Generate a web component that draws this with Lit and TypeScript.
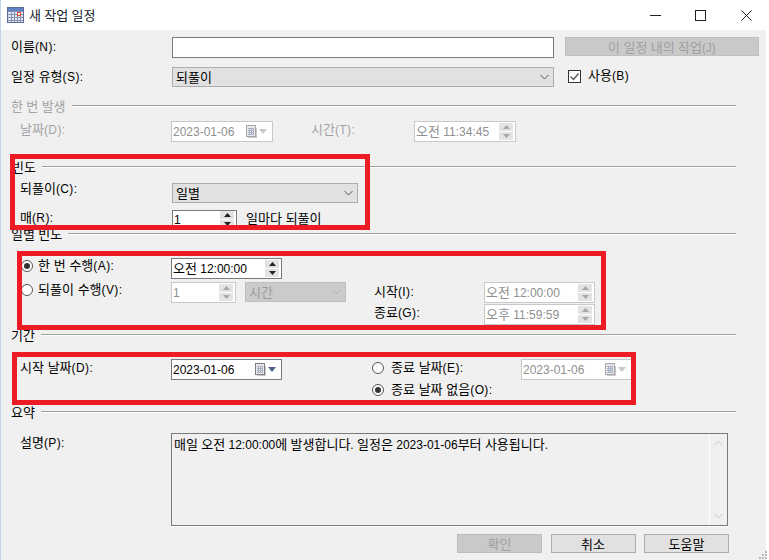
import { LitElement, html, css, svg } from "lit";
import { customElement } from "lit/decorators.js";

// Hangul runs and Latin runs use different faces so their advances match the reference.
// The wrapper keeps spaces at run boundaries when the parent is a flex container.
const t = (s: string) => html`<span class="txt">${s.split(/([\uAC00-\uD7A3]+)/).filter(Boolean).map((p) =>
  /[\uAC00-\uD7A3]/.test(p) ? html`<span class="ko">${p}</span>` : html`<span class="lt">${p}</span>`
)}</span>`;

const chevron = (up = false) => html`<svg class="chev" width="9" height="6" viewBox="0 0 9 6"><path d=${up ? "M.5 5 4.5 1l4 4" : "M.5 1l4 4 4-4"} fill="none" stroke="currentColor"/></svg>`;

const spinBtns = () => html`<span class="spin">
  <span class="sb"><svg width="7" height="4" viewBox="0 0 7 4"><path d="M3.5 0 7 4H0z" fill="currentColor"/></svg></span>
  <span class="sb"><svg width="7" height="4" viewBox="0 0 7 4"><path d="M0 0h7L3.5 4z" fill="currentColor"/></svg></span>
</span>`;

const calendar = () => html`<span class="cal">
  <svg width="12" height="13" viewBox="0 0 12 13">
    <rect x="1.5" y=".5" width="9" height="11" fill="#e8e8ee" stroke="currentColor"/>
    ${[3, 5, 7, 9].map((y) => svg`<path d="M3 ${y + 0.5}h6" stroke="#a9b2c4"/>`)}
    ${[4, 6, 8].map((x) => svg`<path d="M${x + 0.5} 3v7" stroke="#a9b2c4"/>`)}
    <path d="M3 12.5h9M11.5 3v9" stroke="#c9c9c9"/>
  </svg>
  <svg class="drop" width="8" height="5" viewBox="0 0 8 5"><path d="M0 0h8L4 5z" fill="currentColor"/></svg>
</span>`;

const radio = (on = false) => html`<span class="radio">${on ? html`<span class="dot"></span>` : ""}</span>`;

@customElement("app-root")
export class AppRoot extends LitElement {
  static styles = css`
    :host { display: block; position: relative; width: 769px; height: 560px; overflow: hidden; background: #fff;
      font-family: "Liberation Sans", "Noto Sans CJK KR", sans-serif; font-size: 12px; line-height: 14px; color: #000; }
    .ko { font-family: "Noto Sans CJK KR", sans-serif; font-size: 13px; }
    .lab .lt, .rlab .lt { letter-spacing: .4px; }
    .txt { white-space: pre; }
    .window { width: 766px; height: 560px; border-left: 1px solid #c6d5ea; box-sizing: border-box; }
    .title { height: 30px; background: #fff; display: flex; align-items: center; padding-left: 6px; }
    .title .ic { margin-right: 5px; }
    .title .name { flex: 1; color: #10202c; }
    .wc { display: flex; }
    .wc svg { display: block; }
    .wc .min { margin-right: 34px; }
    .wc .max { margin-right: 35px; }
    .wc .cls { margin-right: 14px; }
    .body { height: 530px; background: #f0f0f0; padding: 7px 0 0 10px; box-sizing: border-box; }

    .row { display: flex; align-items: flex-start; }
    .in { padding-left: 9px; }
    .ir { padding-left: 10px; }
    .rc { padding-left: 363px; }
    .re { padding-left: 361px; }
    .lab { flex: none; height: 14px; white-space: nowrap; }
    .o0 { margin-top: 0; } .o1 { margin-top: 1px; } .o2 { margin-top: 2px; } .om { margin-top: -2px; }

    .w161 { width: 161px; } .w151 { width: 151px; } .w152 { width: 152px; } .w103 { width: 103px; } .w110 { width: 110px; }
    .mt9 { margin-top: 9px; } .mt7 { margin-top: 7px; } .mt8 { margin-top: 8px; } .mt3 { margin-top: 3px; } .mt1 { margin-top: 1px; } .mt2 { margin-top: 2px; }
    .mt14 { margin-top: 14px; } .mt17 { margin-top: 17px; }
    .h17 { height: 17px; }
    .h14 { height: 14px; }

    .head { display: flex; align-items: center; gap: 6px; width: 725px; height: 14px; }
    .head.h1 { margin-top: 12px; }
    .head.h2 { margin-top: 18px; }
    .head.p1 { padding-left: 1px; box-sizing: border-box; }
    .head .line { flex: 1; height: 1px; background: #a0a0a0; border-bottom: 1px solid #fff; }
    .dis { color: #a3a3a3; }

    .field { flex: none; height: 21px; box-sizing: border-box; border: 1px solid #7a7a7a; background: #fff; display: flex; align-items: center; padding-left: 1px; position: relative; }
    .field.off { border-color: #c8c8c8; color: #8f8f8f; }
    .field.off .spin, .field.off .cal { color: #a6a6a6; }
    .spin { margin-left: auto; margin-right: 2px; display: flex; flex-direction: column; gap: 1px; color: #222; }
    .sb { width: 14px; height: 8px; background: #e3e3e3; display: flex; align-items: center; justify-content: center; }
    .sb svg { display: block; }
    .cal { margin-left: auto; margin-right: 5px; display: flex; align-items: center; gap: 2px; color: #7d7d7d; }
    .cal svg { display: block; }
    .cal .drop { color: #4f6186; }
    .field.off .cal .drop { color: #c9c9c2; }

    .sel { flex: none; height: 20px; box-sizing: border-box; background: #e1e1e1; border: 1px solid #adadad; display: flex; align-items: center; padding: 0 4px 0 3px; }
    .sel .chev { margin-left: auto; color: #555; }
    .sel.off { background: #cbcbcb; border-color: #bfbfbf; color: #9a9a9a; }
    .sel.off .chev { color: #b0b0b0; }
    .chev { display: block; }

    .act { flex: none; width: 194px; height: 19px; margin-left: 11px; box-sizing: border-box; background: #c9c9c9; border: 1px solid #bfbfbf; color: #a0a0a0; text-align: center; line-height: 17px; }
    .check { flex: none; width: 13px; height: 13px; box-sizing: border-box; border: 1px solid #333; background: #fff; margin: 3px 7px 0 14px; }
    .check svg { display: block; }
    .w382 { width: 382px; } .w186 { width: 186px; } .w101 { width: 101px; }
    .w102 { width: 102px; } .w111 { width: 111px; } .w65 { width: 65px; } .s19 { height: 19px; }
    .ml38 { margin-left: 38px; } .ml9 { margin-left: 9px; } .ml28 { margin-left: 28px; } .ml90 { margin-left: 90px; }
    .rlab { flex: none; display: flex; align-items: center; gap: 5px; width: 150px; height: 14px; }
    .rlab.e { gap: 7px; width: auto; }
    .rlab.e.r-end { width: 149px; }
    .radio { flex: none; width: 12px; height: 12px; box-sizing: border-box; border: 1.5px solid #555; border-radius: 50%; background: #fff; display: flex; align-items: center; justify-content: center; margin-top: 1px; }
    .dot { width: 6px; height: 6px; border-radius: 50%; background: #333; }
    .unit { margin-left: 9px; }

    .summary { flex: none; width: 557px; height: 93px; box-sizing: border-box; border: 1px solid #7a7a7a; box-shadow: 0 1px 0 #fff; display: flex; }
    .summary .text { flex: 1; padding: 3px 2px; }
    .sbar { flex: none; width: 17px; border-left: 1px solid #fff; display: flex; flex-direction: column; justify-content: space-between; align-items: center; padding: 6px 0; color: #c4c4c4; }

    .btns { display: flex; gap: 8.5px; margin-left: 446px; margin-top: 8px; }
    .btn { width: 85px; height: 19px; box-sizing: border-box; background: #e1e1e1; border: 1px solid #adadad; text-align: center; line-height: 17px; }
    .btn.off { background: #c9c9c9; border-color: #bcbcbc; color: #a0a0a0; }

    .grip { position: absolute; left: 759px; top: 551px; display: block; }
    .red { position: absolute; box-sizing: border-box; border: 5px solid #ed1c24; pointer-events: none; }
    .r1 { left: 10px; top: 154px; width: 360px; height: 76px; }
    .r2 { left: 17px; top: 251px; width: 589px; height: 79px; }
    .r3 { left: 12px; top: 352px; width: 624px; height: 53px; }
  `;

  render() {
    return html`
      <div class="window">
        <div class="title">
          <svg class="ic" width="17" height="16" viewBox="0 0 17 16">
            <rect x=".5" y=".5" width="16" height="15" fill="#dfe5f2" stroke="#5b6f96"/>
            <rect x="1" y="1" width="15" height="3" fill="#5f83c4"/>
            ${[4, 7, 10, 13].map((y) => svg`<path d="M1 ${y + 0.5}h15" stroke="#8593ae"/>`)}
            ${[4, 7, 10, 13].map((x) => svg`<path d="M${x + 0.5} 4v11" stroke="#8593ae"/>`)}
            <rect x="10.5" y="5.5" width="3" height="3" fill="#fff" stroke="#e0492f"/>
          </svg>
          <span class="name">${t("새 작업 일정")}</span>
          <div class="wc">
            <svg class="min" width="11" height="11" viewBox="0 0 11 11"><path d="M0 5.5h11" stroke="#222"/></svg>
            <svg class="max" width="11" height="11" viewBox="0 0 11 11"><rect x=".5" y=".5" width="10" height="10" fill="none" stroke="#222"/></svg>
            <svg class="cls" width="11" height="11" viewBox="0 0 11 11"><path d="M.5.5l10 10M10.5.5l-10 10" stroke="#222" fill="none"/></svg>
          </div>
        </div>
        <div class="body">
          <div class="row">
            <span class="lab w161 o2">${t("이름(N):")}</span>
            <div class="field w382"></div>
            <div class="act">${t("이 일정 내의 작업(J)")}</div>
          </div>
          <div class="row mt9">
            <span class="lab w161 o2">${t("일정 유형(S):")}</span>
            <div class="sel w382">${t("되풀이")}${chevron()}</div>
            <div class="check"><svg width="11" height="11" viewBox="0 0 11 11"><path d="M1.5 5.5l3 3 5-6" fill="none" stroke="#555" stroke-width="1.3"/></svg></div>
            <span class="lab o1">${t("사용(B)")}</span>
          </div>

          <div class="head h1 dis"><span>${t("한 번 발생")}</span><span class="line"></span></div>
          <div class="row in mt8 dis">
            <span class="lab w151 o1">${t("날짜(D):")}</span>
            <div class="field off w102">${t("2023-01-06")}${calendar()}</div>
            <span class="lab w103 o1 ml38">${t("시간(T):")}</span>
            <div class="field off w102">${t("오전 11:34:45")}${spinBtns()}</div>
          </div>

          <div class="head h2 p1"><span>${t("빈도")}</span><span class="line"></span></div>
          <div class="row in mt9">
            <span class="lab w152 om">${t("되풀이(C):")}</span>
            <div class="sel w186">${t("일별")}${chevron()}</div>
          </div>
          <div class="row in mt7 h17">
            <span class="lab w152 o0">${t("매(R):")}</span>
            <div class="field w65 s19">${t("1")}${spinBtns()}</div>
            <span class="lab unit o1">${t("일마다 되풀이")}</span>
          </div>

          <div class="head"><span>${t("일별 빈도")}</span><span class="line"></span></div>
          <div class="row ir mt17">
            <span class="rlab">${radio(true)}<span>${t("한 번 수행(A):")}</span></span>
            <div class="field w111">${t("오전 12:00:00")}${spinBtns()}</div>
          </div>
          <div class="row ir mt3">
            <span class="rlab">${radio()}<span>${t("되풀이 수행(V):")}</span></span>
            <div class="field off w65 dis">${t("1")}${spinBtns()}</div>
            <div class="sel off w101 ml9">${t("시간")}${chevron()}</div>
            <span class="lab w110 o2 ml28">${t("시작(I):")}</span>
            <div class="field off w111">${t("오전 12:00:00")}${spinBtns()}</div>
          </div>
          <div class="row rc mt1">
            <span class="lab w110 o1">${t("종료(G):")}</span>
            <div class="field off w111">${t("오후 11:59:59")}${spinBtns()}</div>
          </div>

          <div class="head mt3"><span>${t("기간")}</span><span class="line"></span></div>
          <div class="row in mt17">
            <span class="lab w151 o1">${t("시작 날짜(D):")}</span>
            <div class="field w111">${t("2023-01-06")}${calendar()}</div>
            <span class="rlab e r-end ml90 o1">${radio()}<span>${t("종료 날짜(E):")}</span></span>
            <div class="field off w111">${t("2023-01-06")}${calendar()}</div>
          </div>
          <div class="row re mt2 h14">
            <span class="rlab e">${radio(true)}<span>${t("종료 날짜 없음(O):")}</span></span>
          </div>

          <div class="head mt9"><span>${t("요약")}</span><span class="line"></span></div>
          <div class="row in mt14">
            <span class="lab w151 o2">${t("설명(P):")}</span>
            <div class="summary">
              <div class="text">${t("매일 오전 12:00:00에 발생합니다. 일정은 2023-01-06부터 사용됩니다.")}</div>
              <div class="sbar">${chevron(true)}${chevron()}</div>
            </div>
          </div>
          <div class="btns">
            <div class="btn off">${t("확인")}</div>
            <div class="btn">${t("취소")}</div>
            <div class="btn">${t("도움말")}</div>
          </div>
        </div>
      </div>
      <svg class="grip" width="8" height="8" viewBox="0 0 8 8" fill="#bbb">
        <rect x="6" y="0" width="2" height="2"/><rect x="3" y="3" width="2" height="2"/><rect x="6" y="3" width="2" height="2"/>
        <rect x="0" y="6" width="2" height="2"/><rect x="3" y="6" width="2" height="2"/><rect x="6" y="6" width="2" height="2"/>
      </svg>
      <div class="red r1"></div>
      <div class="red r2"></div>
      <div class="red r3"></div>
    `;
  }
}
